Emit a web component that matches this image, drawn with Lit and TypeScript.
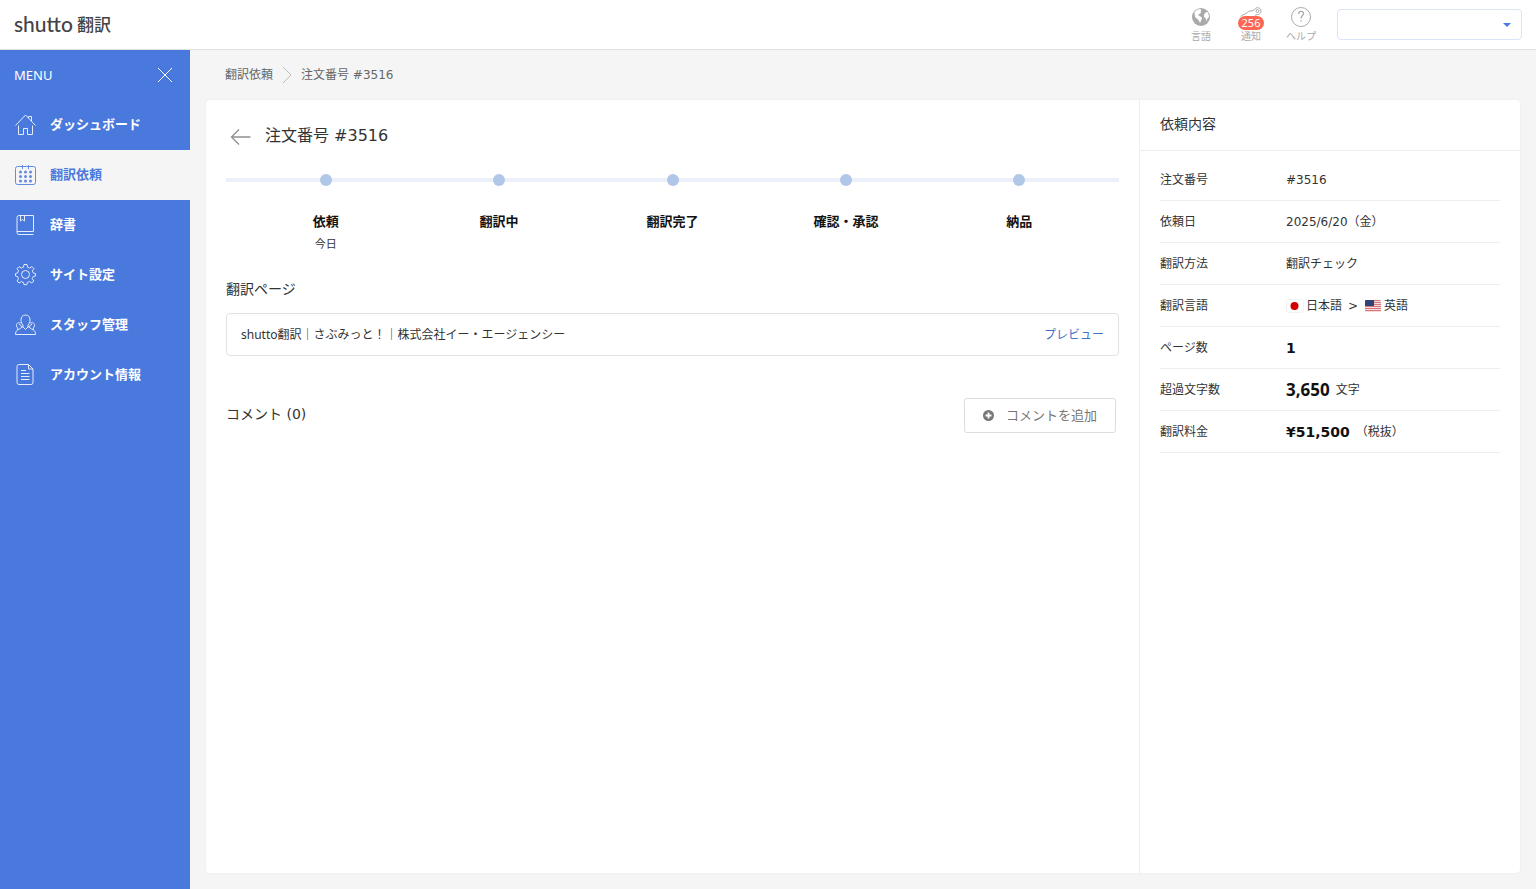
import { LitElement, html, css, svg, nothing } from "lit";
import { customElement } from "lit/decorators.js";
import { classMap } from "lit/directives/class-map.js";

const houseIcon = svg`<path d="M.5 11.500 10.500 1l10 10.500M3.500 11.500v9h5v-6h4v6h5v-9M13.500 4V2.500h3V7"/>`;
const calendarIcon = svg`<rect x=".5" y="2.500" width="20" height="18" rx="2"/><path d="M7.500 1v4M13.500 1v4"/><path stroke-width="3" stroke-linecap="round" stroke-dasharray="0 4.500" d="M5.500 8v9.500M10.500 8v9.500M15.500 8v9.500"/>`;
const bookIcon = svg`<path d="M18.500 17.500v-16H4a2 2 0 0 0-2 2v15a2 2 0 0 0 2 2h14.500M2 17.500h16.500M5.500 1.500v5.500l2-1.500 2 1.500V1.500"/>`;
const gearIcon = svg`<circle cx="10.500" cy="10.500" r="4"/><path d="M9 .5h3l.6 2.700 2.100.9L17 2.600 19 4.700l-1.700 2.100.9 2.100 2.300.6v2.500l-2.300.6-.9 2.100 1.500 2.300-2 2-2.300-1.500-2.100.9-.6 2.300H9l-.6-2.300-2.100-.9L4 19l-2-2 1.500-2.300-.9-2.100L.5 12V9.500l2.100-.6.9-2.100L2 4.700 4 2.600l2.300 1.500 2.100-.9z"/>`;
const staffIcon = svg`<path d="M10.500 1c-3 0-4.500 2-4.500 5 0 2.500 1 4 2 5v2l2.500 2.500L13 13v-2c1-1 2-2.500 2-5 0-3-1.500-5-4.500-5zM8 12.500 4.500 15c-3 1.500-4 2-4 5.500h20c0-3.500-1-4-4-5.500L13 12.500M5.700 9C2.500 8 1 10 1.500 12c.3 1 .7 1.500 1.300 2v2M15.300 9c3.200-1 4.700 1 4.200 3-.3 1-.7 1.500-1.300 2v2M4 10.500c1.500 0 2.500 1 2.500 3M17 10.500c-1.500 0-2.500 1-2.500 3"/>`;
const documentIcon = svg`<path d="M4 .5h9.500l4.500 4.500v13.500a2 2 0 0 1-2 2H4a2 2 0 0 1-2-2v-16a2 2 0 0 1 2-2zM13.500.5v4.500H18M6 6.500h5M6 9.500h8.500M6 12.500h8.500M6 15.500h8.500"/>`;

const MENU = [
  { label: "ダッシュボード", icon: houseIcon },
  { label: "翻訳依頼", icon: calendarIcon, active: true },
  { label: "辞書", icon: bookIcon },
  { label: "サイト設定", icon: gearIcon },
  { label: "スタッフ管理", icon: staffIcon },
  { label: "アカウント情報", icon: documentIcon },
];

const STEPS = [
  { label: "依頼", note: "今日" },
  { label: "翻訳中" },
  { label: "翻訳完了" },
  { label: "確認・承認" },
  { label: "納品" },
];

const japanFlag = html`<svg class="flag" viewBox="0 0 18 14" aria-hidden="true">
  <rect x=".5" y=".5" width="17" height="13" rx="2" fill="#fff" stroke="#f2f2f2"/>
  <circle cx="8.500" cy="7" r="4" fill="#d30000"/></svg>`;
const usFlag = html`<svg class="flag" viewBox="0 0 18 14" aria-hidden="true">
  <rect x="1" y="1" width="16" height="12" rx="1.500" fill="#f3dcdd"/>
  <path stroke="#d9777c" d="M1.500 1.500h15M1 3.500h16M1 5.500h16M1 7.500h16M1 9.500h16M1 11.500h16"/>
  <path fill="#2f4474" d="M1 2a1 1 0 0 1 1-1h8v6H1z"/></svg>`;

@customElement("app-root")
export class AppRoot extends LitElement {
  static styles = css`
    :host {
      display: flex;
      flex-direction: column;
      min-height: 100vh;
      background: #f5f5f5;
      color: #333;
      font-family: "DejaVu Sans", "Noto Sans CJK JP", sans-serif;
      font-size: 12px;
      line-height: 20px;
    }
    * { box-sizing: border-box; }
    a { color: inherit; text-decoration: none; }
    button, select { font: inherit; cursor: pointer; }
    h1, h2, dl, dd, dt, ul, ol { margin: 0; padding: 0; font-weight: 400; list-style: none; }
    svg { display: block; flex: none; }

    .header {
      display: flex;
      align-items: center;
      height: 50px;
      padding: 0 14px;
      background: #fff;
      border-bottom: 1px solid #e0e0e0;
    }
    .logo {
      display: flex;
      align-items: center;
      gap: 4px;
      margin-right: auto;
      padding-bottom: 2px;
      color: #444;
      font-family: Lato, sans-serif;
      font-size: 21px;
      font-weight: 500;
    }
    .logo-ja { font: 500 17px/24px "Noto Sans CJK JP", sans-serif; }
    .tools { display: flex; margin-right: 11px; padding-top: 2px; }
    .tool {
      position: relative;
      display: flex;
      flex-direction: column;
      align-items: center;
      width: 50px;
      padding: 0;
      border: 0;
      background: none;
      color: #aaa;
      font-size: 10px;
      line-height: 14px;
      gap: 3px;
    }
    .badge {
      position: absolute;
      top: 9px;
      left: 12px;
      width: 26px;
      height: 14px;
      border-radius: 7px;
      background: #fd6652;
      color: #fff;
      font: 11px/14px "Noto Sans", sans-serif;
      text-align: center;
    }
    .account {
      width: 185px;
      height: 31px;
      padding: 0 12px;
      border: 1px solid #d9e4f6;
      border-radius: 4px;
      appearance: none;
      background: #fff
        url('data:image/svg+xml,<svg xmlns="http://www.w3.org/2000/svg" width="8" height="4"><path d="M0 0h8L4 4z" fill="%234a79dd"/></svg>')
        no-repeat right 10px center;
    }

    .body { display: flex; flex: 1; }
    .sidebar { flex: none; width: 190px; background: #4a79dd; color: #fff; }
    .menu-head {
      display: flex;
      align-items: center;
      justify-content: space-between;
      height: 50px;
      padding: 0 16px 0 14px;
      font: 13px/20px "Noto Sans", sans-serif;
    }
    .close { padding: 0; border: 0; background: none; color: inherit; }
    .item {
      display: flex;
      align-items: center;
      gap: 14px;
      height: 50px;
      padding: 0 15px;
      font-size: 13px;
      font-weight: 700;
    }
    .item.active { background: #f5f5f5; color: #4a79dd; }
    .line { fill: none; stroke: currentColor; }
    .item .line { opacity: 0.85; }

    .main {
      display: flex;
      flex: 1;
      flex-direction: column;
      min-width: 0;
      padding: 0 16px 16px;
    }
    .crumbs {
      display: flex;
      align-items: center;
      gap: 9px;
      height: 50px;
      padding: 0 19px;
      color: #666;
    }
    .card {
      display: flex;
      flex: 1;
      background: #fff;
      border-radius: 4px;
      box-shadow: 0 0 2px #e6e6e6;
    }
    .order { flex: 1; min-width: 0; padding: 24px 20px; }
    .title { display: flex; align-items: center; gap: 14px; padding-left: 4px; }
    .title h1 { font-size: 16px; line-height: 24px; }

    .steps {
      display: flex;
      margin-top: 26px;
      padding: 0 13px;
      background: linear-gradient(#ebf0fa, #ebf0fa) 0 4px / 100% 4px no-repeat;
    }
    .step { flex: 1; text-align: center; font-size: 11px; }
    .dot {
      display: block;
      width: 12px;
      height: 12px;
      margin: 0 auto 26px;
      border-radius: 50%;
      background: #b1c7e7;
    }
    .step-label { display: block; color: #111; font-size: 13px; font-weight: 700; }
    .step-note { display: block; line-height: 26px; }

    .heading { font-size: 14px; line-height: 20px; }
    .pages { margin-top: 21px; }
    .page {
      display: flex;
      justify-content: space-between;
      align-items: center;
      height: 43px;
      margin-top: 14px;
      padding: 0 14px;
      border: 1px solid #e2e2e2;
      border-radius: 4px;
    }
    .page-name { font-family: "Noto Sans", "Noto Sans CJK JP", sans-serif; }
    .preview { color: #3f71c8; }
    .comments {
      display: flex;
      justify-content: space-between;
      align-items: flex-start;
      margin-top: 42px;
      padding-right: 3px;
    }
    .comments .heading { padding-top: 6px; }
    .add {
      display: flex;
      align-items: center;
      gap: 12px;
      height: 35px;
      padding: 0 18px;
      border: 1px solid #ddd;
      border-radius: 3px;
      background: #fff;
      color: #777;
      font-size: 13px;
    }

    .detail { flex: none; width: 381px; border-left: 1px solid #eee; }
    .detail-head { height: 51px; padding: 14px 20px; border-bottom: 1px solid #eee; }
    .rows { padding: 8px 20px; }
    .row {
      display: flex;
      align-items: center;
      height: 42px;
      border-bottom: 1px solid #eee;
    }
    .row dt { flex: none; width: 126px; }
    .row dd { display: flex; align-items: center; gap: 6px; }
    .pair { display: flex; align-items: center; gap: 2px; }
    .strong { color: #111; font-size: 14px; font-weight: 700; }
    .count { color: #111; font: 700 17px/20px "Noto Sans", sans-serif; }
    .flag { width: 18px; height: 14px; }
  `;

  private row(label: string, value: unknown) {
    return html`<div class="row"><dt>${label}</dt><dd>${value}</dd></div>`;
  }

  render() {
    return html`
      <header class="header">
        <a class="logo" href="#"><span>shutto</span><span class="logo-ja">翻訳</span></a>
        <div class="tools">
          <button class="tool">
            <svg width="20" height="20" viewBox="0 0 20 20" aria-hidden="true">
              <circle cx="10" cy="10" r="9" fill="#aaa"/>
              <path fill="#fff" d="M3.500 5 6 2.800l3-.8 1.500 1-1 1.300.8 1.200-2 1.500L7 8l1.500 1 2.500 1.500-.5 2L9 16l-1.500-3-3.500-3zM13 7.500l1.500-2 2-.5 1.300 3 .2 2-1.500 1.500-.8 2.500-1.200-3-1.500-1z"/>
            </svg>
            <span>言語</span>
          </button>
          <button class="tool">
            <svg class="line" width="22" height="20" viewBox="0 0 22 20" aria-hidden="true">
              <path d="M.5 9.500C2 7.500 4 8 6 6.500s3.500-3 6-2.500l2.500-1.500c1.500-3 6.500-2 6.500 1.500s-3.500 4-5 3.500L15 11"/>
              <circle cx="17.500" cy="4" r="1.500"/>
            </svg>
            <span class="badge">256</span>
            <span>通知</span>
          </button>
          <button class="tool">
            <svg class="line" width="20" height="20" viewBox="0 0 20 20" aria-hidden="true">
              <circle cx="10" cy="10" r="9.500"/>
              <path stroke-width="1.300" d="M7.500 7c0-3.500 5-3.500 5-.5 0 2-2.500 2.200-2.500 5M10 13.300v1.500"/>
            </svg>
            <span>ヘルプ</span>
          </button>
        </div>
        <select class="account" aria-label="アカウント"><option></option></select>
      </header>

      <div class="body">
        <nav class="sidebar">
          <div class="menu-head">
            <span>MENU</span>
            <button class="close" aria-label="閉じる">
              <svg class="line" width="18" height="18" viewBox="0 0 18 18"><path d="m2 2 14 14M16 2 2 16"/></svg>
            </button>
          </div>
          ${MENU.map(
            (m) => html`<a href="#" class=${classMap({ item: true, active: !!m.active })}>
              <svg class="line" width="21" height="22" viewBox="0 0 21 22" aria-hidden="true">${m.icon}</svg>
              <span>${m.label}</span>
            </a>`
          )}
        </nav>

        <main class="main">
          <nav class="crumbs">
            <a href="#">翻訳依頼</a>
            <svg class="line" width="10" height="18" viewBox="0 0 10 18" stroke-opacity=".4"><path d="m1 1 8 8-8 8"/></svg>
            <span>注文番号 #3516</span>
          </nav>
          <div class="card">
            <section class="order">
              <div class="title">
                <a href="#" aria-label="戻る">
                  <svg class="line" width="21" height="18" viewBox="0 0 21 18" stroke-opacity=".55"><path stroke-width="1.300" d="M20.500 10H1.500M9 2.500 1.500 10 9 17.500"/></svg>
                </a>
                <h1>注文番号 #3516</h1>
              </div>
              <ol class="steps">
                ${STEPS.map(
                  (s) => html`<li class="step">
                    <span class="dot"></span>
                    <span class="step-label">${s.label}</span>
                    ${s.note ? html`<span class="step-note">${s.note}</span>` : nothing}
                  </li>`
                )}
              </ol>
              <div class="pages">
                <h2 class="heading">翻訳ページ</h2>
                <div class="page">
                  <span class="page-name">shutto翻訳｜さぶみっと！｜株式会社イー・エージェンシー</span>
                  <a class="preview" href="#">プレビュー</a>
                </div>
              </div>
              <div class="comments">
                <h2 class="heading">コメント (0)</h2>
                <button class="add">
                  <svg width="11" height="11" viewBox="0 0 11 11" aria-hidden="true">
                    <circle cx="5.500" cy="5.500" r="5.500" fill="#777"/>
                    <path stroke="#fff" stroke-width="1.800" d="M5.500 2.500v6M2.500 5.500h6"/>
                  </svg>
                  <span>コメントを追加</span>
                </button>
              </div>
            </section>

            <aside class="detail">
              <h2 class="heading detail-head">依頼内容</h2>
              <dl class="rows">
                ${this.row("注文番号", "#3516")}
                ${this.row("依頼日", "2025/6/20（金）")}
                ${this.row("翻訳方法", "翻訳チェック")}
                ${this.row(
                  "翻訳言語",
                  html`<span class="pair">${japanFlag}日本語</span><span>&gt;</span><span class="pair">${usFlag}英語</span>`
                )}
                ${this.row("ページ数", html`<span class="strong">1</span>`)}
                ${this.row("超過文字数", html`<span class="count">3,650</span><span>文字</span>`)}
                ${this.row("翻訳料金", html`<span class="strong">¥51,500</span><span>（税抜）</span>`)}
              </dl>
            </aside>
          </div>
        </main>
      </div>
    `;
  }
}
